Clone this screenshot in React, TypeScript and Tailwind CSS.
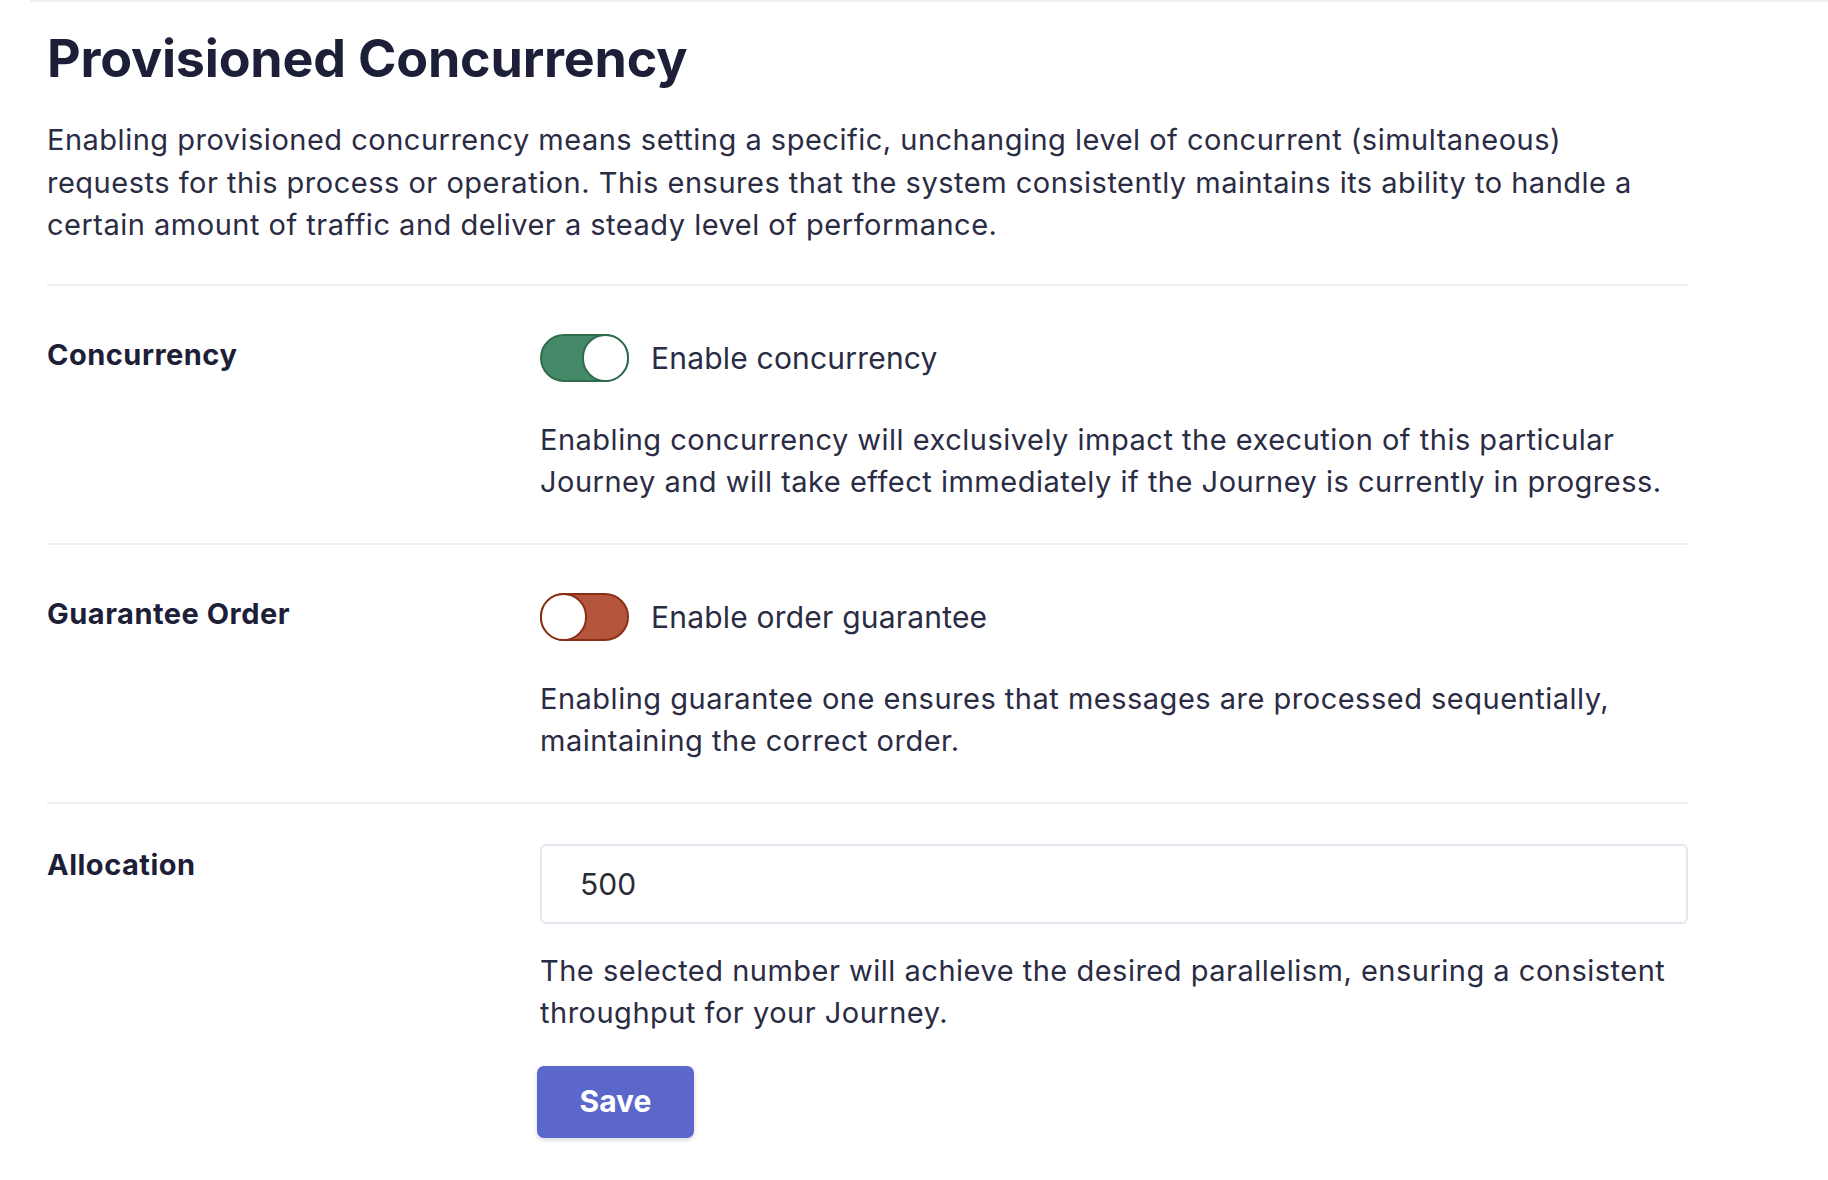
import React from "react";

function Toggle({ on }: { on: boolean }) {
  if (on) {
    return (
      <div className="flex h-[48px] w-[89px] shrink-0 items-center justify-end rounded-full border-2 border-[#2f6b4d] bg-[#458a68]">
        <div className="-mr-[2px] h-[48px] w-[47px] rounded-full border-2 border-[#2f6b4d] bg-white" />
      </div>
    );
  }
  return (
    <div className="flex h-[48px] w-[89px] shrink-0 items-center justify-start rounded-full border-2 border-[#8a2e17] bg-[#b5563c]">
      <div className="-ml-[2px] h-[48px] w-[47px] rounded-full border-2 border-[#8a2e17] bg-white" />
    </div>
  );
}

function Divider() {
  return <div className="h-[2px] w-full bg-[#eeeeee]" />;
}

export default function App() {
  return (
    <div className="min-h-screen bg-white font-['Inter',sans-serif]">
      <div className="ml-[30px] border-t-2 border-[#f1f1f1]">
        <div className="w-[1658px] pl-[17px]">
          <h1 className="pt-[27px] text-[52px] font-bold leading-[60px] tracking-[-0.2px] text-[#1d1e38]">
            Provisioned Concurrency
          </h1>
          <p className="mt-[30px] text-[29px] leading-[42.5px] tracking-[0.5px] text-[#2a2c44]">
            Enabling provisioned concurrency means setting a specific, unchanging level of concurrent (simultaneous)
            requests for this process or operation. This ensures that the system consistently maintains its ability
            to handle a certain amount of traffic and deliver a steady level of performance.
          </p>
          <div className="mt-[37px]">
            <Divider />
          </div>

          <div className="grid grid-cols-[493px_1fr] pt-[48px] pb-[40px]">
            <div className="text-[29px] font-bold leading-[42px] tracking-[0.5px] text-[#1d1e38]">Concurrency</div>
            <div>
              <div className="flex items-center gap-[22px]">
                <Toggle on={true} />
                <span className="text-[30px] leading-[48px] tracking-[0.2px] text-[#2a2c44]">Enable concurrency</span>
              </div>
              <p className="mt-[37px] text-[29px] leading-[42px] tracking-[0.5px] text-[#2a2c44]">
                Enabling concurrency will exclusively impact the execution of this particular Journey and will take
                effect immediately if the Journey is currently in progress.
              </p>
            </div>
          </div>
          <Divider />

          <div className="grid grid-cols-[493px_1fr] pt-[48px] pb-[40px]">
            <div className="text-[29px] font-bold leading-[42px] tracking-[0.5px] text-[#1d1e38]">Guarantee Order</div>
            <div>
              <div className="flex items-center gap-[22px]">
                <Toggle on={false} />
                <span className="text-[30px] leading-[48px] tracking-[0.2px] text-[#2a2c44]">Enable order guarantee</span>
              </div>
              <p className="mt-[37px] text-[29px] leading-[42px] tracking-[0.5px] text-[#2a2c44]">
                Enabling guarantee one ensures that messages are processed sequentially, maintaining the correct
                order.
              </p>
            </div>
          </div>
          <Divider />

          <div className="grid grid-cols-[493px_1fr] pt-[40px]">
            <div className="text-[29px] font-bold leading-[42px] tracking-[0.5px] text-[#1d1e38]">Allocation</div>
            <div>
              <input
                type="text"
                defaultValue="500"
                className="h-[80px] w-full rounded-[6px] border-2 border-[#e3e6ee] bg-white pl-[38px] text-[30px] text-[#2b2b33] outline-none"
              />
              <p className="mt-[26px] text-[29px] leading-[42px] tracking-[0.5px] text-[#2a2c44]">
                The selected number will achieve the desired parallelism, ensuring a consistent throughput for your
                Journey.
              </p>
              <button
                type="button"
                className="-ml-[3px] mt-[32px] h-[72px] w-[157px] rounded-[7px] bg-[#5c67cc] text-[30px] font-bold text-white shadow-[0_2px_4px_rgba(40,40,80,0.18)]"
              >
                Save
              </button>
            </div>
          </div>
        </div>
      </div>
    </div>
  );
}
